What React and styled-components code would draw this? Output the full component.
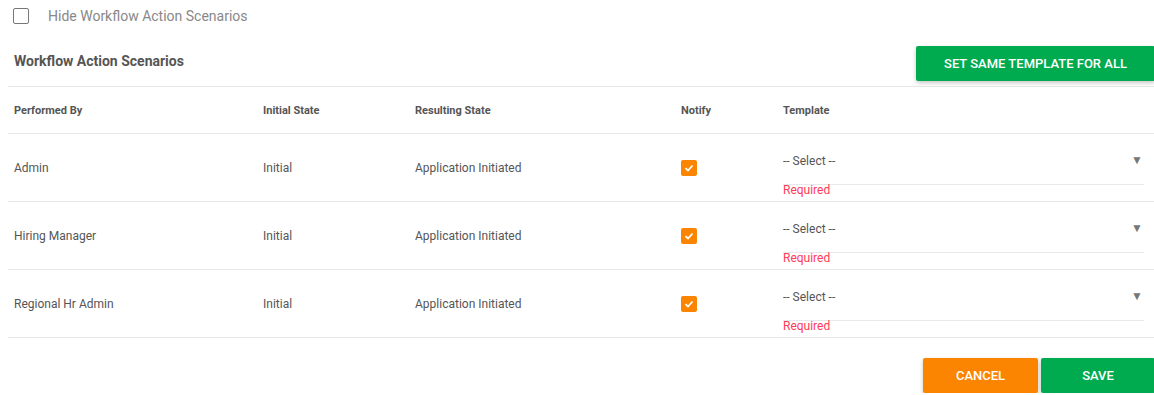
import React from "react";
import styled, { createGlobalStyle } from "styled-components";

const GlobalStyle = createGlobalStyle`
  html, body {
    margin: 0;
    padding: 0;
    background: #fff;
    overflow: hidden;
  }
  body {
    font-family: Roboto, "Liberation Sans", Arial, sans-serif;
    color: #555;
  }
`;

const Page = styled.div`
  width: 1147px;
  margin-left: 8px;
`;

const HideRow = styled.label`
  display: flex;
  align-items: center;
  height: 32px;
  padding-left: 5px;
  font-size: 14px;
  color: #888;
`;

const Box = styled.span`
  width: 14px;
  height: 14px;
  border: 1px solid #777;
  border-radius: 2px;
  margin-right: 19px;
  box-sizing: content-box;
`;

const TitleBar = styled.div`
  display: flex;
  justify-content: space-between;
  align-items: center;
  height: 46px;
  margin-top: 8px;
  border-bottom: 1px solid #e8e8e8;
  padding-left: 6px;
`;

const Title = styled.h3`
  margin: 0;
  font-size: 14px;
  font-weight: 700;
  color: #555;
  padding-bottom: 4px;
`;

const Button = styled.button`
  height: 35px;
  width: ${(p) => p.$width}px;
  border: none;
  border-radius: 2px;
  background: ${(p) => (p.$variant === "orange" ? "#fb8500" : "#00ab4f")};
  color: #fff;
  font-family: inherit;
  font-size: 13px;
  font-weight: 500;
  text-transform: uppercase;
  box-shadow: 0 2px 4px rgba(0, 0, 0, 0.22);
  cursor: pointer;
`;

const Table = styled.table`
  width: 100%;
  border-collapse: collapse;
  table-layout: fixed;
`;

const Th = styled.th`
  text-align: left;
  font-size: 11px;
  font-weight: 700;
  color: #555;
  height: 46px;
  padding: 0 0 0 6px;
  border-bottom: 1px solid #e8e8e8;
`;

const Td = styled.td`
  font-size: 12px;
  color: #555;
  height: 67px;
  padding: 0 0 0 6px;
  border-bottom: 1px solid #e8e8e8;
  vertical-align: middle;
`;

const TemplateTd = styled(Td)`
  vertical-align: top;
  padding-top: 20px;
  padding-right: 11px;
  height: 47px;
`;

const Check = styled.span`
  display: inline-flex;
  align-items: center;
  justify-content: center;
  width: 16px;
  height: 16px;
  border-radius: 2px;
  background: #fb8500;
  vertical-align: middle;
`;

const Select = styled.div`
  display: flex;
  justify-content: space-between;
  align-items: flex-start;
  height: 30px;
  line-height: 14px;
  border-bottom: 1px solid #e8e8e8;
  font-size: 12px;
  color: #555;
`;

const Arrow = styled.span`
  font-size: 12px;
  line-height: 10px;
  color: #777;
  margin-right: 1px;
  margin-top: 1px;
`;

const Required = styled.div`
  font-size: 12px;
  line-height: 14px;
  margin-top: -2px;
  color: #ff3b55;
`;

const Footer = styled.div`
  display: flex;
  justify-content: flex-end;
  gap: 3px;
  margin-top: 20px;
`;

const rows = ["Admin", "Hiring Manager", "Regional Hr Admin"];

export default function App() {
  return (
    <>
      <GlobalStyle />
      <Page>
        <HideRow>
          <Box />
          Hide Workflow Action Scenarios
        </HideRow>
        <TitleBar>
          <Title>Workflow Action Scenarios</Title>
          <Button $width={239}>Set same template for all</Button>
        </TitleBar>
        <Table>
          <colgroup>
            <col style={{ width: 249 }} />
            <col style={{ width: 152 }} />
            <col style={{ width: 266 }} />
            <col style={{ width: 102 }} />
            <col />
          </colgroup>
          <thead>
            <tr>
              <Th>Performed By</Th>
              <Th>Initial State</Th>
              <Th>Resulting State</Th>
              <Th>Notify</Th>
              <Th>Template</Th>
            </tr>
          </thead>
          <tbody>
            {rows.map((r) => (
              <tr key={r}>
                <Td>{r}</Td>
                <Td>Initial</Td>
                <Td>Application Initiated</Td>
                <Td>
                  <Check>
                    <svg width="10" height="10" viewBox="0 0 10 10">
                      <path d="M1.5 5.2 L4 7.5 L8.5 2.5" fill="none" stroke="#fff" strokeWidth="1.8" />
                    </svg>
                  </Check>
                </Td>
                <TemplateTd>
                  <Select>
                    <span>-- Select --</span>
                    <Arrow>▼</Arrow>
                  </Select>
                  <Required>Required</Required>
                </TemplateTd>
              </tr>
            ))}
          </tbody>
        </Table>
        <Footer>
          <Button $variant="orange" $width={115}>Cancel</Button>
          <Button $width={114}>Save</Button>
        </Footer>
      </Page>
    </>
  );
}
